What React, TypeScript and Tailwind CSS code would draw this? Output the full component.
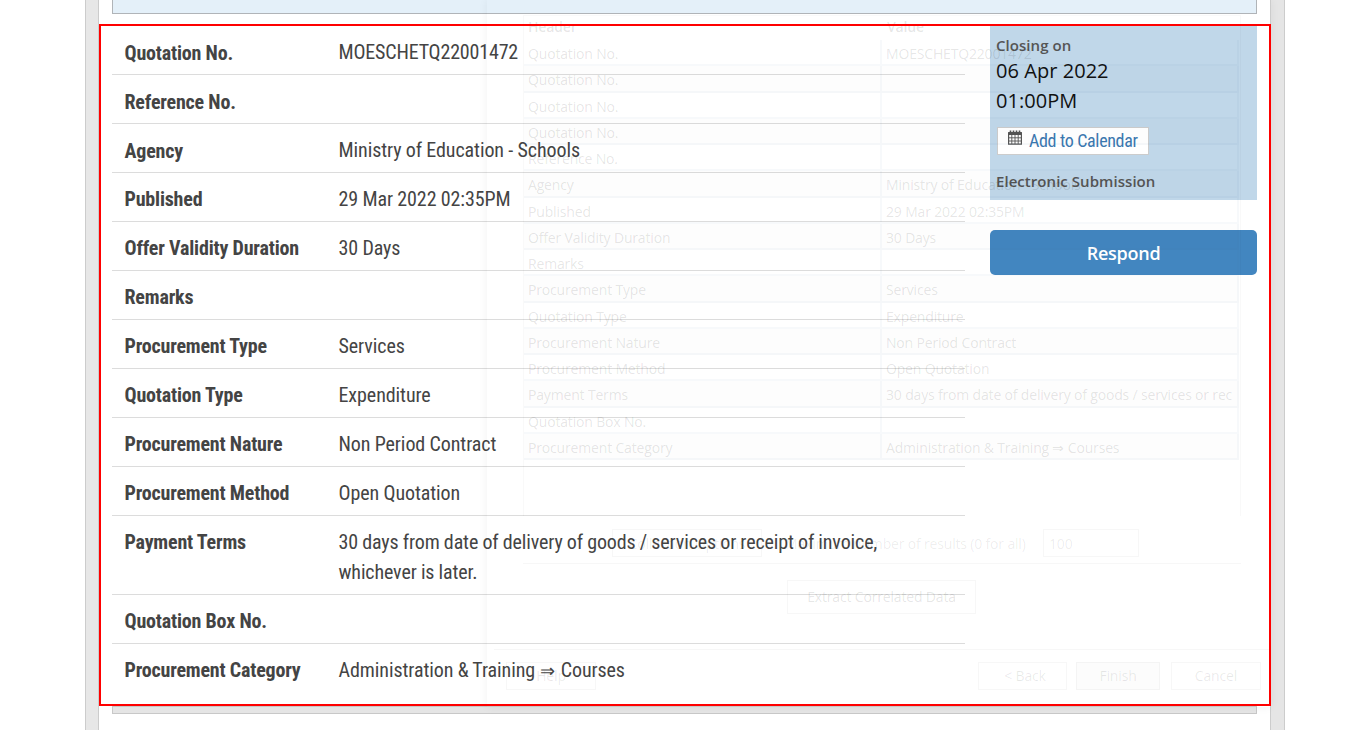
import type { ReactNode } from 'react';

type Row = { label: string; value: ReactNode; tall?: boolean; low?: boolean };

const rows: Row[] = [
  { label: 'Quotation No.', value: <span className="tracking-[-0.17px]">MOESCHETQ22001472</span>, low: true },
  { label: 'Reference No.', value: '', low: true },
  { label: 'Agency', value: 'Ministry of Education - Schools', low: true },
  { label: 'Published', value: '29 Mar 2022 02:35PM' },
  { label: 'Offer Validity Duration', value: '30 Days' },
  { label: 'Remarks', value: '' },
  { label: 'Procurement Type', value: 'Services' },
  { label: 'Quotation Type', value: 'Expenditure' },
  { label: 'Procurement Nature', value: 'Non Period Contract' },
  { label: 'Procurement Method', value: 'Open Quotation' },
  {
    label: 'Payment Terms',
    value: (
      <span className="tracking-[-0.13px]">
        30 days from date of delivery of goods / services or receipt of invoice,
        <br />
        whichever is later.
      </span>
    ),
    tall: true,
  },
  { label: 'Quotation Box No.', value: '' },
  {
    label: 'Procurement Category',
    value: (
      <>
        Administration &amp; Training{' '}
        <span className="inline-block w-[17px] text-center font-['Liberation_Serif',serif] text-[18px] leading-none [text-indent:-1px]">
          ⇒
        </span>{' '}
        Courses
      </>
    ),
  },
];

const ghostRows: [string, string][] = [
  ['Quotation No.', 'MOESCHETQ22001472'],
  ['Quotation No.', ''],
  ['Quotation No.', ''],
  ['Quotation No.', ''],
  ['Reference No.', ''],
  ['Agency', 'Ministry of Education - Schools'],
  ['Published', '29 Mar 2022 02:35PM'],
  ['Offer Validity Duration', '30 Days'],
  ['Remarks', ''],
  ['Procurement Type', 'Services'],
  ['Quotation Type', 'Expenditure'],
  ['Procurement Nature', 'Non Period Contract'],
  ['Procurement Method', 'Open Quotation'],
  ['Payment Terms', '30 days from date of delivery of goods / services or rec'],
  ['Quotation Box No.', ''],
  ['Procurement Category', 'Administration & Training ⇒ Courses'],
];

function Details() {
  return (
    <dl className="w-[853px] font-['Roboto_Condensed','Roboto',sans-serif] text-[20px] leading-[30px] text-[#444] [font-stretch:75%]">
      {rows.map((r, i) => (
        <div
          key={r.label}
          className={`flex pl-[12.5px] pt-[11px] ${r.tall ? 'h-[79px]' : 'h-[49px]'} ${i < rows.length - 1 ? 'border-b border-[#dcdcdc]' : ''}`}
        >
          <dt className={`w-[214px] shrink-0 whitespace-nowrap font-bold tracking-[-0.19px] ${r.low ? 'pt-px' : ''}`}>
            {r.label}
          </dt>
          <dd className="whitespace-nowrap tracking-[-0.08px] [word-spacing:-0.2px]">{r.value}</dd>
        </div>
      ))}
    </dl>
  );
}

function CalendarIcon() {
  return (
    <svg width="14" height="15" viewBox="0 0 14 15" fill="none" stroke="#555" className="mt-[2px] shrink-0">
      <path d="M0.6 3h12.8v11.2H0.6z" strokeWidth="1.2" />
      <path d="M0.5 2.5h13v2h-13z" fill="#555" />
      <path d="M2.5 0.5v3M5.5 0.5v3M8.5 0.5v3M11.5 0.5v3" strokeWidth="1.6" />
      <path d="M3.8 4.5v9.5M7 4.5v9.5M10.2 4.5v9.5M1 7.8h12M1 11h12" strokeWidth="0.9" />
    </svg>
  );
}

function Sidebar() {
  return (
    <aside className="w-[267px] font-['Open_Sans',sans-serif]">
      <div className="h-[174px] bg-[#c0d7e9] pl-[6px] pt-[9px]">
        <p className="text-[15px] font-[550] leading-[20px] tracking-[0.05px] text-[#555]">Closing on</p>
        <p className="pt-px text-[20px] font-[380] leading-[30px] tracking-[0.05px] text-[#111]">
          06 Apr 2022
          <br />
          01:00PM
        </p>
        <a className="ml-[1px] mt-[11px] flex h-[28px] w-[152px] border border-[#ccc] bg-white pl-[10px] font-['Roboto_Condensed','Roboto',sans-serif] text-[18px] leading-[26px] text-[#3b78b0] [font-stretch:75%]">
          <CalendarIcon />
          <span className="ml-[7px] whitespace-nowrap tracking-[-0.35px]">Add to Calendar</span>
        </a>
        <p className="mt-[16px] text-[15px] font-[550] leading-[20px] tracking-[0.05px] text-[#555]">
          Electronic Submission
        </p>
      </div>
      <button className="mt-[30px] block h-[45px] w-full rounded-[5px] bg-[#4286c0] text-center text-[18px] font-semibold leading-[47px] tracking-[-0.25px] text-white">
        Respond
      </button>
    </aside>
  );
}

/* Nearly transparent dialog window fading out above the page */
function FadingDialog() {
  return (
    <div className="pointer-events-none absolute left-[487px] top-0 h-[707px] w-[784px] whitespace-nowrap font-['Open_Sans',sans-serif] text-[14px] leading-[20px] tracking-[-0.17px] text-black/[0.11] shadow-[0_0_9px_rgba(0,0,0,0.06)]">
      <div className="ml-[36px] mt-[15px] h-[501px] w-[718px] border-x border-t border-black/[0.025]">
        <div className="flex h-[24px] font-semibold">
          <span className="w-[358px] pl-[4px] pt-px">Header</span>
          <span className="pl-[5px] pt-px">Value</span>
        </div>
        {ghostRows.map(([k, v], i) => (
          <div
            key={i}
            className="flex h-[26.25px] w-[715px] border-b-2 border-r-2 border-[#4070a0]/[0.045] odd:bg-black/[0.006]"
          >
            <span className="w-[358px] shrink-0 border-r-2 border-[#4070a0]/[0.045] pl-[4px] pt-[4px]">{k}</span>
            <span className="pl-[4px] pt-[4px]">{v}</span>
          </div>
        ))}
      </div>
      <div className="ml-[36px] flex h-[48px] w-[718px] border-b border-black/[0.03] pt-[13px] text-black/[0.08]">
        <div className="ml-[89px] h-[28px] w-[150px] border border-black/[0.03] text-center leading-[28px]">
          Collection Options
        </div>
        <span className="ml-[23px] w-[242px] leading-[30px]">Maximum number of results (0 for all)</span>
        <div className="ml-[16px] h-[28px] w-[96px] border border-black/[0.03] pl-[5px] leading-[28px]">100</div>
      </div>
      <div className="ml-[300px] mt-[16px] h-[34px] w-[189px] border border-black/[0.03] text-center leading-[32px]">
        Extract Correlated Data
      </div>
      <div className="ml-[7px] mt-[35px] flex border-t border-black/[0.03] pt-[12px] text-center leading-[26px] text-black/[0.09]">
        <div className="ml-[12px] h-[28px] w-[90px] border border-black/[0.03]">Help</div>
        <div className="ml-[382px] h-[28px] w-[89px] border border-black/[0.03] pl-[5px]">&lt; Back</div>
        <div className="ml-[9px] h-[28px] w-[84px] border border-black/[0.03] bg-black/[0.012]">Finish</div>
        <div className="ml-[11px] h-[28px] w-[90px] border border-black/[0.03]">Cancel</div>
      </div>
    </div>
  );
}

export default function App() {
  return (
    <div className="relative h-[730px] w-[1370px] overflow-hidden bg-white">
      <div className="ml-[85px] flex h-full w-[1200px]">
        <div className="h-full w-[14px] shrink-0 border-x border-[#ccc] bg-[#e7e7e7]" />
        <main className="w-[1172px] shrink-0">
          <div className="ml-[13px] h-[14px] w-[1145px] border-x border-b border-[#b0b4b8] bg-[#e4f0f9]" />
          <section className="relative mt-[10px] flex h-[682px] bg-white py-[2px] pl-[13px]">
            <Details />
            <div className="ml-[25px]">
              <Sidebar />
            </div>
            <div className="pointer-events-none absolute inset-0 z-10 border-2 border-[#ff0000]" />
          </section>
          <div className="ml-[13px] h-[8px] w-[1145px] border border-[#c8c8c8] bg-[#e5e5e5]" />
        </main>
        <div className="-ml-px h-full w-[15px] shrink-0 border-x border-[#ccc] bg-[#e5e5e5]" />
      </div>
      <FadingDialog />
    </div>
  );
}
